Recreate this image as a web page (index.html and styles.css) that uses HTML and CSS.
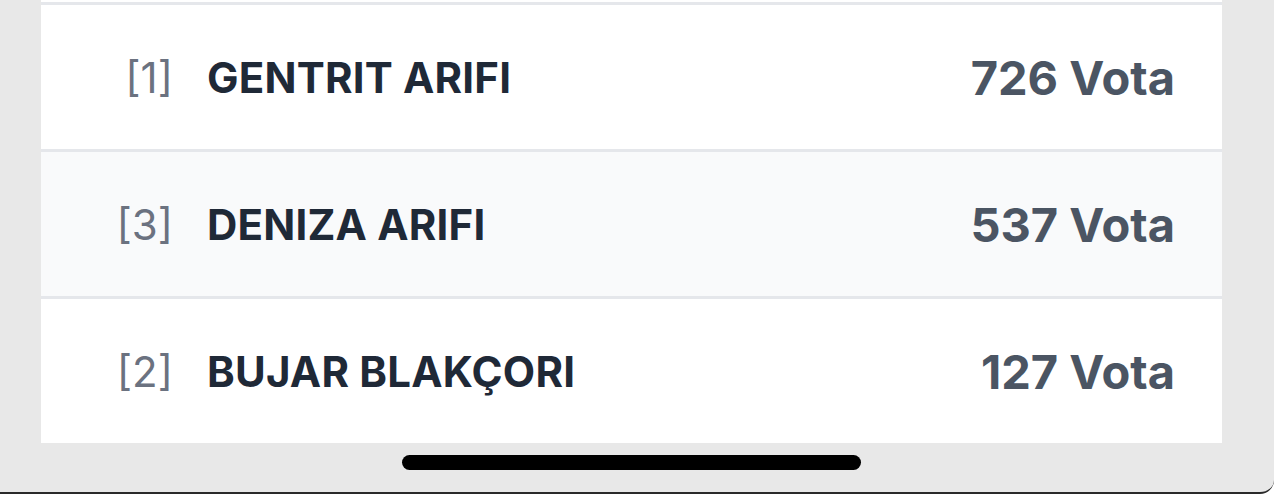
FILE: index.html
```html
<!DOCTYPE html>
<html lang="sq">
<head>
<meta charset="utf-8">
<title>Rezultatet</title>
<link rel="stylesheet" href="styles.css">
</head>
<body>
<div class="screen">
  <div class="card">
    <div class="row">
      <span class="idx">[1]</span>
      <span class="name">GENTRIT ARIFI</span>
      <span class="votes">726 Vota</span>
    </div>
    <div class="row alt">
      <span class="idx">[3]</span>
      <span class="name">DENIZA ARIFI</span>
      <span class="votes">537 Vota</span>
    </div>
    <div class="row">
      <span class="idx">[2]</span>
      <span class="name">BUJAR BLAKÇORI</span>
      <span class="votes">127 Vota</span>
    </div>
  </div>
  <div class="home-bar"><div class="indicator"></div></div>
</div>
</body>
</html>
```
FILE: styles.css
```css
html, body {
  margin: 0;
  padding: 0;
}
body {
  font-family: Inter, "Noto Sans", sans-serif;
  width: 1274px;
  height: 494px;
  overflow: hidden;
  background: #ffffff;
}
.screen {
  width: 1274px;
  height: 494px;
  background: #e8e8e8;
  border-bottom: 2px solid #2a2a2a;
  border-bottom-right-radius: 14px;
  box-sizing: border-box;
  padding-left: 41px;
  display: flex;
  flex-direction: column;
}
.card {
  width: 1181px;
  background: #ffffff;
  padding-top: 2px;
}
.row {
  display: grid;
  grid-template-columns: 132px 1fr auto;
  column-gap: 34px;
  align-items: center;
  height: 144px;
  border-top: 3px solid #e5e7eb;
  padding-right: 47px;
  background: #ffffff;
}
.row.alt {
  background: #f9fafb;
}
.idx {
  text-align: right;
  font-size: 42px;
  font-weight: 400;
  color: #6b7280;
}
.name {
  font-size: 42px;
  font-weight: 700;
  color: #1f2937;
  letter-spacing: 0.2px;
}
.votes {
  font-size: 47px;
  font-weight: 700;
  color: #4b5563;
  text-align: right;
}
.home-bar {
  width: 1181px;
  display: flex;
  justify-content: center;
  padding-top: 12px;
}
.indicator {
  width: 459px;
  height: 15px;
  border-radius: 8px;
  background: #000000;
}
```
